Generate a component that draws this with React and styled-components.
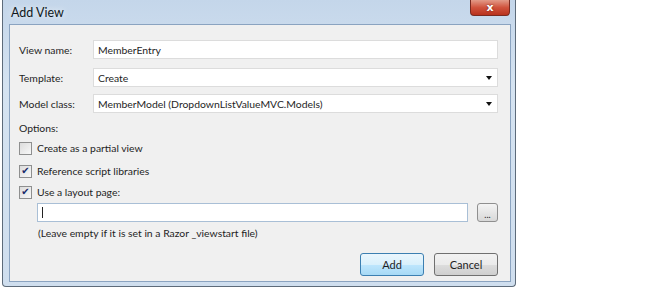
import React from "react";
import styled, { createGlobalStyle } from "styled-components";

const GlobalStyle = createGlobalStyle`
  html, body {
    margin: 0;
    padding: 0;
    background: #ffffff;
  }
  body {
    font-family: Lato, "Open Sans", "Liberation Sans", sans-serif;
    font-size: 10.4px;
    color: #1e1e1e;
  }
`;

const Window = styled.div`
  width: 514px;
  height: 287px;
  margin-left: 2px;
  display: flex;
  flex-direction: column;
  border: 1px solid #5d6b7a;
  border-top: none;
  border-radius: 0 0 4px 4px;
  background: linear-gradient(180deg, #c4d6ea 0%, #d5e3f1 30%, #cfdeee 100%);
  padding: 0 4px 4px 6px;
  box-sizing: border-box;
`;

const TitleBar = styled.div`
  height: 24px;
  display: flex;
  align-items: flex-start;
  justify-content: space-between;
  flex-shrink: 0;
`;

const Title = styled.div`
  margin-top: 5px;
  margin-left: 2px;
  font-size: 12.5px;
  color: #101820;
  text-shadow: 0 0 6px rgba(255, 255, 255, 0.9);
`;

const CloseButton = styled.div`
  width: 40px;
  height: 16px;
  margin-right: 1px;
  border: 1px solid #7a2a20;
  border-top: none;
  border-radius: 0 0 4px 4px;
  background: linear-gradient(180deg, #e39a88 0%, #d0533d 50%, #b8321e 100%);
  color: #ffffff;
  font-family: "DejaVu Sans", sans-serif;
  font-weight: bold;
  font-size: 11px;
  display: flex;
  align-items: center;
  justify-content: center;
  box-sizing: border-box;
  text-shadow: 0 0 2px #6b1a10;
`;

const Panel = styled.div`
  flex: 1;
  display: flex;
  flex-direction: column;
  background: #f0f0f0;
  border: 1px solid #8aa3c0;
  padding: 15px 12px 0 9px;
`;

const FieldRow = styled.div`
  display: flex;
  align-items: center;
  height: 19px;
  margin-bottom: ${(p) => p.gap || 0}px;
`;

const Label = styled.div`
  width: 74px;
  flex-shrink: 0;
`;

const Field = styled.div`
  flex: 1;
  height: 19px;
  display: flex;
  align-items: center;
  justify-content: space-between;
  background: #ffffff;
  border: 1px solid #dcdcdc;
  box-sizing: border-box;
  padding: 0 5px 0 4px;
`;

const Arrow = styled.span`
  width: 0;
  height: 0;
  border-left: 3px solid transparent;
  border-right: 3px solid transparent;
  border-top: 4px solid #111;
`;

const SectionLabel = styled.div`
  margin-top: 7px;
  height: 16px;
  line-height: 16px;
`;

const CheckRow = styled.div`
  display: flex;
  align-items: center;
  height: 16px;
  margin-top: ${(p) => p.top}px;
  gap: 5px;
`;

const Box = styled.div`
  width: 11px;
  height: 11px;
  border: 1px solid #8e8f8f;
  background: linear-gradient(135deg, #dcdcdc, #f8f8f8);
  display: flex;
  align-items: center;
  justify-content: center;
  font-size: 10px;
  line-height: 1;
  color: #1a2a6a;
  font-family: "DejaVu Sans", sans-serif;
`;

const PathRow = styled.div`
  display: flex;
  align-items: center;
  gap: 9px;
  margin-top: 3px;
  padding-left: 18px;
`;

const PathInput = styled.div`
  flex: 1;
  height: 19px;
  background: #ffffff;
  border: 1px solid #a9bfd6;
  box-sizing: border-box;
  display: flex;
  align-items: center;
  padding-left: 4px;
`;

const Caret = styled.span`
  width: 1px;
  height: 11px;
  background: #222;
`;

const BrowseButton = styled.div`
  width: 21px;
  height: 19px;
  box-sizing: border-box;
  border: 1px solid #8f8f8f;
  border-radius: 3px;
  background: linear-gradient(180deg, #f4f4f4 0%, #e6e6e6 50%, #d8d8d8 100%);
  display: flex;
  align-items: flex-end;
  justify-content: center;
  font-size: 9px;
  line-height: 12px;
`;

const Hint = styled.div`
  margin-top: 3px;
  padding-left: 19px;
  height: 16px;
  line-height: 16px;
`;

const ButtonBar = styled.div`
  display: flex;
  justify-content: flex-end;
  gap: 10px;
  margin-top: 12px;
`;

const Button = styled.div`
  width: 64px;
  height: 23px;
  box-sizing: border-box;
  border: 1px solid ${(p) => (p.primary ? "#3c7fb1" : "#707070")};
  border-radius: 3px;
  font-size: 11px;
  background: ${(p) =>
    p.primary
      ? "linear-gradient(180deg, #eaf6fd 0%, #d9f0fc 50%, #bee6fd 51%, #a7d9f5 100%)"
      : "linear-gradient(180deg, #f2f2f2 0%, #ebebeb 50%, #dddddd 51%, #cfcfcf 100%)"};
  display: flex;
  align-items: center;
  justify-content: center;
`;

export default function App() {
  return (
    <>
      <GlobalStyle />
      <Window>
        <TitleBar>
          <Title>Add View</Title>
          <CloseButton>x</CloseButton>
        </TitleBar>
        <Panel>
          <FieldRow gap={9}>
            <Label>View name:</Label>
            <Field>MemberEntry</Field>
          </FieldRow>
          <FieldRow gap={7}>
            <Label>Template:</Label>
            <Field>
              Create
              <Arrow />
            </Field>
          </FieldRow>
          <FieldRow>
            <Label>Model class:</Label>
            <Field>
              MemberModel (DropdownListValueMVC.Models)
              <Arrow />
            </Field>
          </FieldRow>
          <SectionLabel>Options:</SectionLabel>
          <CheckRow top={4}>
            <Box />
            Create as a partial view
          </CheckRow>
          <CheckRow top={7}>
            <Box>✔</Box>
            Reference script libraries
          </CheckRow>
          <CheckRow top={5}>
            <Box>✔</Box>
            Use a layout page:
          </CheckRow>
          <PathRow>
            <PathInput>
              <Caret />
            </PathInput>
            <BrowseButton>...</BrowseButton>
          </PathRow>
          <Hint>(Leave empty if it is set in a Razor _viewstart file)</Hint>
          <ButtonBar>
            <Button primary>Add</Button>
            <Button>Cancel</Button>
          </ButtonBar>
        </Panel>
      </Window>
    </>
  );
}
